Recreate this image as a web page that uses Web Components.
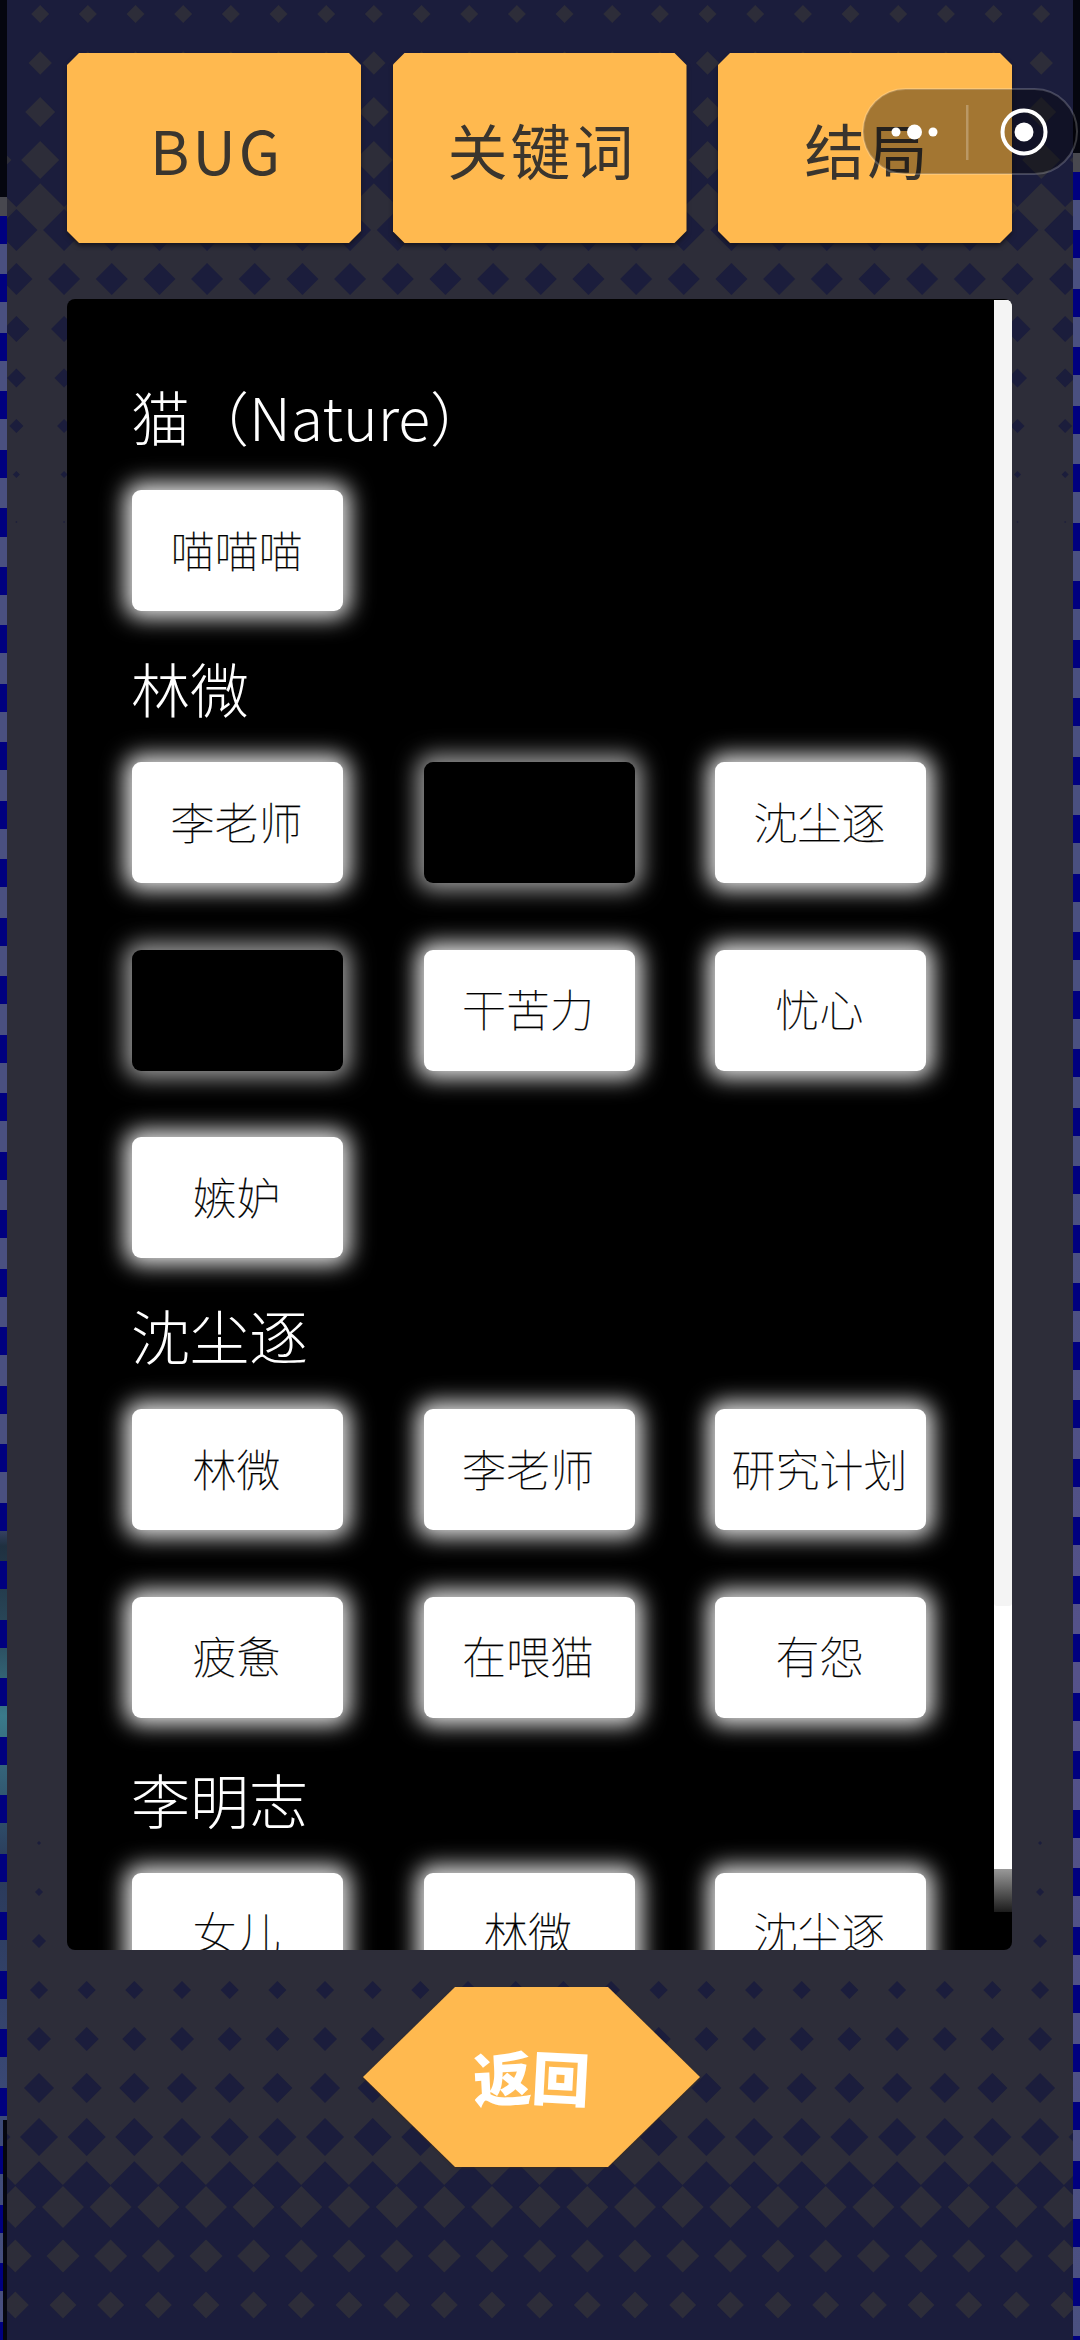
<!DOCTYPE html>
<html lang="zh">
<head>
<meta charset="utf-8">
<title>线索</title>
<style>
  html, body { margin: 0; padding: 0; background: #1b1d3a; }
  body { width: 1080px; height: 2340px; overflow: hidden; font-family: "Noto Sans CJK SC", "Noto Sans", sans-serif; }
</style>
</head>
<body>
<game-page>
  <tab-button>BUG</tab-button>
  <tab-button>关键词</tab-button>
  <tab-button>结局</tab-button>

  <item-section slot="list" heading="猫（Nature）">
    <tag-item>喵喵喵</tag-item>
  </item-section>
  <item-section slot="list" heading="林微">
    <tag-item>李老师</tag-item>
    <tag-item dark></tag-item>
    <tag-item>沈尘逐</tag-item>
    <tag-item dark></tag-item>
    <tag-item>干苦力</tag-item>
    <tag-item>忧心</tag-item>
    <tag-item>嫉妒</tag-item>
  </item-section>
  <item-section slot="list" heading="沈尘逐">
    <tag-item>林微</tag-item>
    <tag-item>李老师</tag-item>
    <tag-item>研究计划</tag-item>
    <tag-item>疲惫</tag-item>
    <tag-item>在喂猫</tag-item>
    <tag-item>有怨</tag-item>
  </item-section>
  <item-section slot="list" heading="李明志" style="margin-top: 45px">
    <tag-item>女儿</tag-item>
    <tag-item>林微</tag-item>
    <tag-item>沈尘逐</tag-item>
  </item-section>

  <back-button slot="back">返回</back-button>
</game-page>

<script>
// halftone diamonds behind everything, rows measured off the reference
class HalftoneBg extends HTMLElement {
  connectedCallback() {
    const pitch = 47.67;
    const light = '#2d2d39', dark = '#1b1d3c';
    const rows = [
      // [y, half size, first x, colour] in page coordinates
      [14, 9, 40.2, light], [63, 11.7, 40.2, light], [112, 15, 40.2, light], [160, 19, 40.2, light], [207, 23.8, 40.2, light],
      [230, 21, 16.4, dark], [279, 16, 16.4, dark], [329, 13, 16.4, dark], [378, 9.5, 16.4, dark], [426, 7, 16.4, dark], [474.5, 3.5, 16.4, dark], [522, 1, 16.4, dark],
      [1843, 2, 39, dark], [1892, 4, 39, dark], [1941, 7, 39, dark], [1990, 9, 39, dark], [2039, 12, 39, dark], [2088, 15, 39, dark], [2137, 19, 39, dark], [2185, 23.8, 39, dark],
      [2207, 21, 15.3, light], [2256, 16.5, 15.3, light], [2305, 13.5, 15.3, light]
    ];
    let shapes = '';
    for (const [y, h, x0, fill] of rows) {
      for (let x = x0 - pitch; x < 1100; x += pitch) {
        shapes += `<polygon fill="${fill}" points="${x},${y - h} ${x + h},${y} ${x},${y + h} ${x - h},${y}"/>`;
      }
    }
    this.attachShadow({ mode: 'open' });
    this.shadowRoot.innerHTML = `
      <style>
        :host { display: block; position: absolute; inset: 0; overflow: hidden; }
        svg { display: block; }
      </style>
      <svg width="1080" height="2340" viewBox="7 0 1080 2340">
        <rect x="0" y="0" width="1090" height="2340" fill="#1b1d3c"/>
        <rect x="0" y="207" width="1090" height="1978" fill="#2d2d39"/>
        ${shapes}
      </svg>
    `;
  }
}

// the strip of other page that shows at each side of the window
class SideStrip extends HTMLElement {
  connectedCallback() {
    const left = this.hasAttribute('left');
    const tint = left
      ? 'linear-gradient(to bottom, #4a5080 0 1300px, #1f3040 1330px, #2a4a5c 1420px, #3a7a8a 1500px, #2a3a5a 1650px, #3c4a78 1900px, #4a5080 100%)'
      : 'linear-gradient(to bottom, #4a5080 0 1000px, #55528a 1500px, #4a5080 100%)';
    // near the bottom the left strip narrows to 3px, black beside it
    const cover = left ? 'linear-gradient(to right, transparent 3px, #05060f 3px) left bottom / 100% 220px no-repeat,' : '';
    this.attachShadow({ mode: 'open' });
    this.shadowRoot.innerHTML = `
      <style>
        :host { display: flex; flex-direction: column; width: 7px; flex: none; height: 2340px; background: #05060f; }
        .gray { height: 19px; background: #48484f; }
        .bands {
          flex: 1;
          background:
            ${cover}
            repeating-linear-gradient(to bottom, #00007f 0 28px, transparent 28px 58.5px),
            ${tint};
        }
      </style>
      <div style="height: ${this.getAttribute('top')}px"></div>
      <div class="gray"></div>
      <div class="bands"></div>
    `;
  }
}

class TabButton extends HTMLElement {
  connectedCallback() {
    this.attachShadow({ mode: 'open' });
    this.shadowRoot.innerHTML = `
      <style>
        :host { display: block; flex: none; width: 294px; height: 190px; filter: drop-shadow(0 3px 2px rgba(22, 20, 30, .9)); }
        .face {
          height: 100%;
          box-sizing: border-box;
          padding: 0 0 0 5px;
          display: flex;
          align-items: center;
          justify-content: center;
          background: #ffb94f;
          color: #3a352e;
          font-size: 60px;
          letter-spacing: 3px;
          clip-path: polygon(12px 0, calc(100% - 12px) 0, 100% 12px, 100% calc(100% - 12px), calc(100% - 12px) 100%, 12px 100%, 0 calc(100% - 12px), 0 12px);
        }
      </style>
      <div class="face"><slot></slot></div>
    `;
  }
}

class CapsuleMenu extends HTMLElement {
  connectedCallback() {
    this.attachShadow({ mode: 'open' });
    this.shadowRoot.innerHTML = `
      <style>
        :host { display: block; position: absolute; left: 862px; top: 88px; width: 216px; height: 87px; }
        svg { display: block; }
      </style>
      <svg width="216" height="87" viewBox="0 0 216 87">
        <rect x="1" y="1" width="214" height="85" rx="42.5" fill="rgba(0,0,0,.36)" stroke="rgba(255,255,255,.2)" stroke-width="2"/>
        <circle cx="34" cy="44" r="4.5" fill="#fff"/>
        <circle cx="52.500" cy="44" r="7.500" fill="#fff"/>
        <circle cx="71" cy="44" r="4.500" fill="#fff"/>
        <rect x="104" y="17" width="2.500" height="55" fill="rgba(255,255,255,.25)"/>
        <circle cx="162" cy="44" r="21.500" fill="none" stroke="#fff" stroke-width="4"/>
        <circle cx="162" cy="44" r="9.500" fill="#fff"/>
      </svg>
    `;
  }
}

class TagItem extends HTMLElement {
  connectedCallback() {
    this.attachShadow({ mode: 'open' });
    this.shadowRoot.innerHTML = `
      <style>
        :host {
          display: flex;
          align-items: center;
          justify-content: center;
          box-sizing: border-box;
          padding: 0 2px 4px 0;
          height: 121px;
          border-radius: 9px;
          background: #fff;
          color: #000;
          font-size: 44px;
          font-weight: 100;
          -webkit-text-stroke: .25px #000;
          white-space: nowrap;
          box-shadow: 0 0 22px 7px rgba(255, 255, 255, .9);
        }
        :host([dark]) { background: #000; box-shadow: 0 0 22px 7px rgba(255, 255, 255, .62); }
      </style>
      <slot></slot>
    `;
  }
}

class ItemSection extends HTMLElement {
  connectedCallback() {
    this.attachShadow({ mode: 'open' });
    this.shadowRoot.innerHTML = `
      <style>
        :host { display: block; margin-bottom: 41px; }
        h2 {
          margin: 0 0 30px -1px;
          height: 80px;
          line-height: 72px;
          color: #fff;
          font-size: 59px;
          font-weight: 300;
          white-space: nowrap;
        }
        .grid { display: grid; grid-template-columns: repeat(3, 211px); column-gap: 80.5px; row-gap: 66.5px; }
      </style>
      <h2>${this.getAttribute('heading')}</h2>
      <div class="grid"><slot></slot></div>
    `;
  }
}

class ListPanel extends HTMLElement {
  connectedCallback() {
    this.attachShadow({ mode: 'open' });
    this.shadowRoot.innerHTML = `
      <style>
        :host { display: block; position: relative; height: 1651px; border-radius: 8px; background: #000; overflow: hidden; }
        .scroll { height: 100%; padding: 81px 0 0 65px; box-sizing: border-box; overflow: hidden; }
        .bar {
          position: absolute;
          right: 0;
          top: 1px;
          width: 18px;
          height: 1612px;
          background: linear-gradient(to bottom, #fff 0 1569px, #999 1569px, #1c1c1c 100%);
        }
        .thumb { height: 1306px; border-radius: 3px; background: #f4f4f4; }
      </style>
      <div class="scroll"><slot></slot></div>
      <div class="bar"><div class="thumb"></div></div>
    `;
  }
}

class BackButton extends HTMLElement {
  connectedCallback() {
    const chars = this.textContent.trim().split('');
    this.attachShadow({ mode: 'open' });
    this.shadowRoot.innerHTML = `
      <style>
        :host { display: block; width: 337px; height: 180px; margin-left: 296px; filter: drop-shadow(0 1px 1px rgba(60, 40, 20, .7)); }
        .face {
          height: 100%;
          box-sizing: border-box;
          padding-bottom: 3px;
          display: flex;
          align-items: center;
          justify-content: center;
          background: #ffb94f;
          color: #fff;
          font-size: 58px;
          font-weight: 900;
          clip-path: polygon(92px 0, 245px 0, 100% 50%, 245px 100%, 92px 100%, 0 50%);
        }
        span { display: block; }
        span:first-child { transform: rotate(-3deg); }
        span:last-child { transform: rotate(3deg); }
      </style>
      <div class="face">${chars.map(c => `<span>${c}</span>`).join('')}</div>
    `;
  }
}

class GamePage extends HTMLElement {
  connectedCallback() {
    this.attachShadow({ mode: 'open' });
    this.shadowRoot.innerHTML = `
      <style>
        :host { display: flex; position: relative; width: 1080px; height: 2340px; overflow: hidden; }
        main {
          position: relative;
          flex: 1;
          display: flex;
          flex-direction: column;
          box-sizing: border-box;
          padding: 53px 61px 0 60px;
        }
        .tabs { position: relative; display: flex; justify-content: space-between; margin-bottom: 56px; }
        .list { position: relative; margin-bottom: 37px; }
        .back { position: relative; }
      </style>
      <side-strip left top="197"></side-strip>
      <main>
        <halftone-bg></halftone-bg>
        <div class="tabs"><slot></slot></div>
        <list-panel class="list"><slot name="list"></slot></list-panel>
        <div class="back"><slot name="back"></slot></div>
      </main>
      <side-strip top="153"></side-strip>
      <capsule-menu></capsule-menu>
    `;
  }
}

customElements.define('halftone-bg', HalftoneBg);
customElements.define('side-strip', SideStrip);
customElements.define('tab-button', TabButton);
customElements.define('capsule-menu', CapsuleMenu);
customElements.define('tag-item', TagItem);
customElements.define('item-section', ItemSection);
customElements.define('list-panel', ListPanel);
customElements.define('back-button', BackButton);
customElements.define('game-page', GamePage);
</script>
</body>
</html>
